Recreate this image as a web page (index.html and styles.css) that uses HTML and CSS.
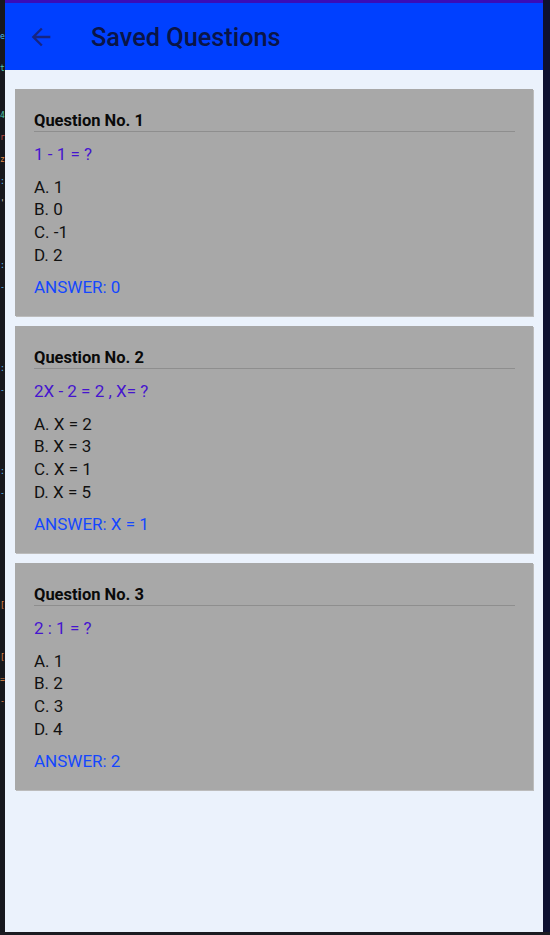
FILE: index.html
```html
<!DOCTYPE html>
<html>
<head>
<meta charset="utf-8">
<link rel="stylesheet" href="styles.css">
</head>
<body>
<div class="screen">
  <div class="gutter">
    <span class="g g-sp1"></span>
    <span class="g c-cyan">e</span>
    <span class="g g-sp2"></span>
    <span class="g c-teal">t</span>
    <span class="g g-sp3"></span>
    <span class="g c-teal">4</span>
    <span class="g c-red">r</span>
    <span class="g c-orange">z</span>
    <span class="g c-blue">:</span>
    <span class="g c-light">'</span>
    <span class="g g-sp4"></span>
    <span class="g c-blue">:</span>
    <span class="g c-blue">-</span>
    <span class="g g-sp5"></span>
    <span class="g c-blue">:</span>
    <span class="g c-blue">-</span>
    <span class="g g-sp5"></span>
    <span class="g c-blue">:</span>
    <span class="g c-blue">-</span>
    <span class="g g-sp6"></span>
    <span class="g c-orange">[</span>
    <span class="g g-sp7"></span>
    <span class="g c-orange">[</span>
    <span class="g c-orange">=</span>
    <span class="g c-orange">-</span>
  </div>
  <div class="app">
    <div class="topline"></div>
    <header class="header">
      <svg class="back" width="28" height="28" viewBox="0 0 24 24"><path d="M20 11H7.83l5.59-5.59L12 4l-8 8 8 8 1.41-1.41L7.83 13H20v-2z" fill="currentColor"/></svg>
      <h1 class="title">Saved Questions</h1>
    </header>
    <main class="list">
      <section class="card">
        <h2 class="qno">Question No. 1</h2>
        <p class="qtext">1 - 1 = ?</p>
        <ul class="opts">
          <li>A. 1</li>
          <li>B. 0</li>
          <li>C. -1</li>
          <li>D. 2</li>
        </ul>
        <p class="answer">ANSWER: 0</p>
      </section>
      <section class="card">
        <h2 class="qno">Question No. 2</h2>
        <p class="qtext">2X - 2 = 2 , X= ?</p>
        <ul class="opts">
          <li>A. X = 2</li>
          <li>B. X = 3</li>
          <li>C. X = 1</li>
          <li>D. X = 5</li>
        </ul>
        <p class="answer">ANSWER: X = 1</p>
      </section>
      <section class="card">
        <h2 class="qno">Question No. 3</h2>
        <p class="qtext">2 : 1 = ?</p>
        <ul class="opts">
          <li>A. 1</li>
          <li>B. 2</li>
          <li>C. 3</li>
          <li>D. 4</li>
        </ul>
        <p class="answer">ANSWER: 2</p>
      </section>
    </main>
  </div>
  <div class="rstrip"></div>
</div>
<div class="bottom"></div>
</body>
</html>
```
FILE: styles.css
```css
* { box-sizing: border-box; }
html, body {
  margin: 0;
  padding: 0;
  width: 550px;
  height: 935px;
  overflow: hidden;
  background: #1b1c22;
  font-family: Roboto, "Noto Sans", Arial, sans-serif;
}
.screen {
  display: flex;
  height: 932px;
}
.gutter {
  width: 5px;
  flex: none;
  background: #17181e;
  display: flex;
  flex-direction: column;
  overflow: hidden;
  font-family: "DejaVu Sans Mono", monospace;
  font-size: 8px;
}
.g {
  display: block;
  height: 22px;
  line-height: 22px;
  width: 5px;
  white-space: nowrap;
}
.g-sp1 { height: 26px; }
.g-sp2 { height: 10px; }
.g-sp3 { height: 25px; }
.g-sp4 { height: 40px; }
.g-sp5 { height: 59px; }
.g-sp6 { height: 90px; }
.g-sp7 { height: 30px; }
.c-cyan { color: #4fb8e8; }
.c-teal { color: #4ec9b0; }
.c-red { color: #c0504a; }
.c-orange { color: #e08a4a; }
.c-blue { color: #59b6f0; }
.c-light { color: #d0d0d0; }

.app {
  width: 538px;
  flex: none;
  display: flex;
  flex-direction: column;
  background: #ebf2fc;
}
.topline {
  height: 3px;
  background: #3a0db8;
}
.header {
  height: 67px;
  background: #0040ff;
  display: flex;
  align-items: center;
  padding-left: 22px;
}
.back {
  color: #162582;
  display: block;
  flex: none;
  margin-top: 1px;
}
.title {
  margin: 2px 0 0 36px;
  font-size: 25.3px;
  font-weight: 500;
  color: #0a1548;
}
.rstrip {
  width: 7px;
  flex: none;
  background: #0e1130;
}
.bottom {
  height: 3px;
  background: #1b1b21;
}

.list {
  display: flex;
  flex-direction: column;
  gap: 10px;
  padding: 19px 10px 0 10px;
}
.card {
  background: #a8a8a8;
  box-shadow: 1px 1px 0 #bcbcbc;
  padding: 22px 18px 17.3px 19px;
}
.qno {
  margin: 0;
  font-size: 16.5px;
  font-weight: 700;
  line-height: 20px;
  color: #0a0a0a;
  border-bottom: 1px solid #8e8e8e;
}
.qtext {
  margin: 11px 0 0;
  font-size: 17px;
  line-height: 22.7px;
  color: #4514cf;
}
.opts {
  list-style: none;
  margin: 10px 0 0;
  padding: 0;
  font-size: 17px;
  line-height: 22.7px;
  color: #111111;
}
.answer {
  margin: 9.5px 0 0;
  font-size: 17px;
  line-height: 22.7px;
  color: #1447ff;
}
```
